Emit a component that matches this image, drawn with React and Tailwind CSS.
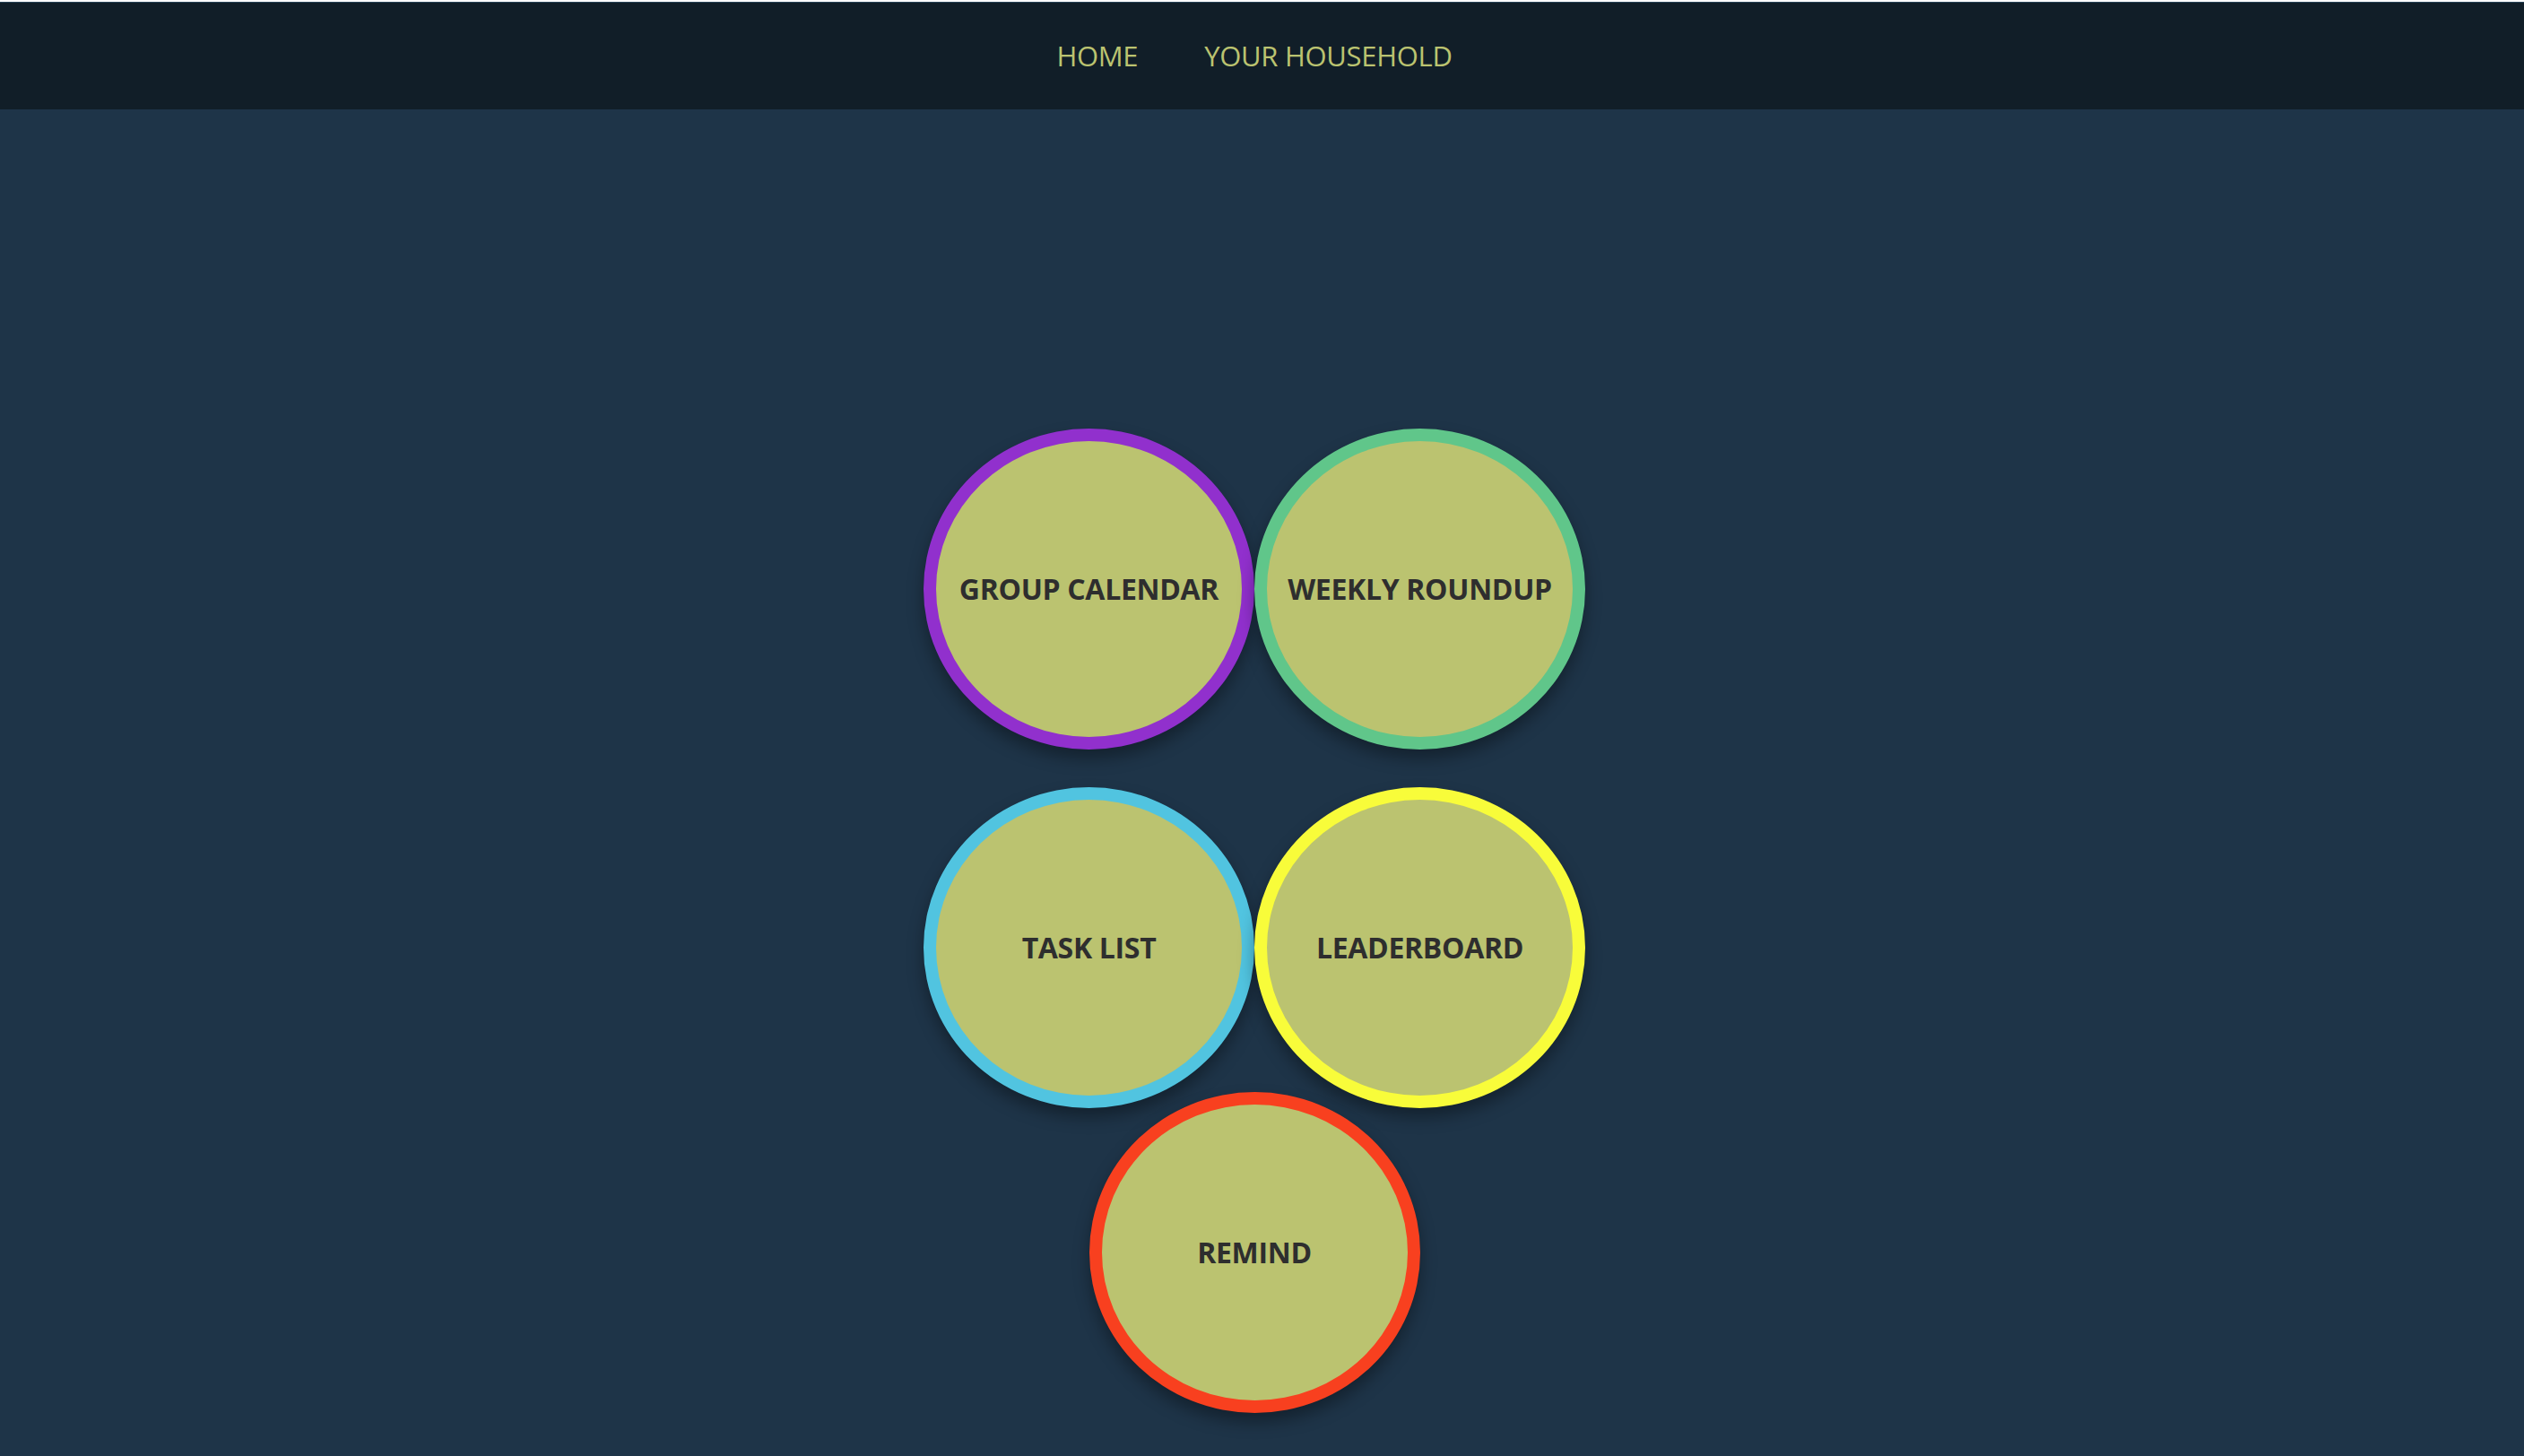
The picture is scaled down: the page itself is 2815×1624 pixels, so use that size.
const CIRCLE_BASE = 'flex items-center justify-center w-[369px] h-[358px] rounded-[50%] border-[14px] bg-[#bbc370] shadow-[0_10px_18px_rgba(0,0,0,0.35)] text-[#2e2e2e] text-[32px] font-bold tracking-[-0.01em]'

function NavLink({ children }) {
  return (
    <a href="#" className="text-[31px] text-[#bbc370] leading-none tracking-[-0.01em]">
      {children}
    </a>
  )
}

function Bubble({ label, ring }) {
  return (
    <button className={`${CIRCLE_BASE} ${ring}`}>
      {label}
    </button>
  )
}

export default function App() {
  return (
    <div className="min-h-screen bg-[#1e3448] font-['Open_Sans','Noto_Sans',sans-serif]">
      <nav className="mt-[2px] h-[120px] bg-[#111e28] flex items-center justify-center gap-[74px] pr-[17px] border-t border-[#2a4458]">
        <NavLink>HOME</NavLink>
        <NavLink>YOUR HOUSEHOLD</NavLink>
      </nav>
      <main className="flex flex-col items-center pt-[356px] pb-[60px] pr-[17px]">
        <div className="flex">
          <Bubble label="GROUP CALENDAR" ring="border-[#9130cd]" />
          <Bubble label="WEEKLY ROUNDUP" ring="border-[#60c68a]" />
        </div>
        <div className="flex mt-[42px]">
          <Bubble label="TASK LIST" ring="border-[#51c4e0]" />
          <Bubble label="LEADERBOARD" ring="border-[#f8fc3a]" />
        </div>
        <div className="flex -mt-[18px]">
          <Bubble label="REMIND" ring="border-[#f8401f]" />
        </div>
      </main>
    </div>
  )
}
